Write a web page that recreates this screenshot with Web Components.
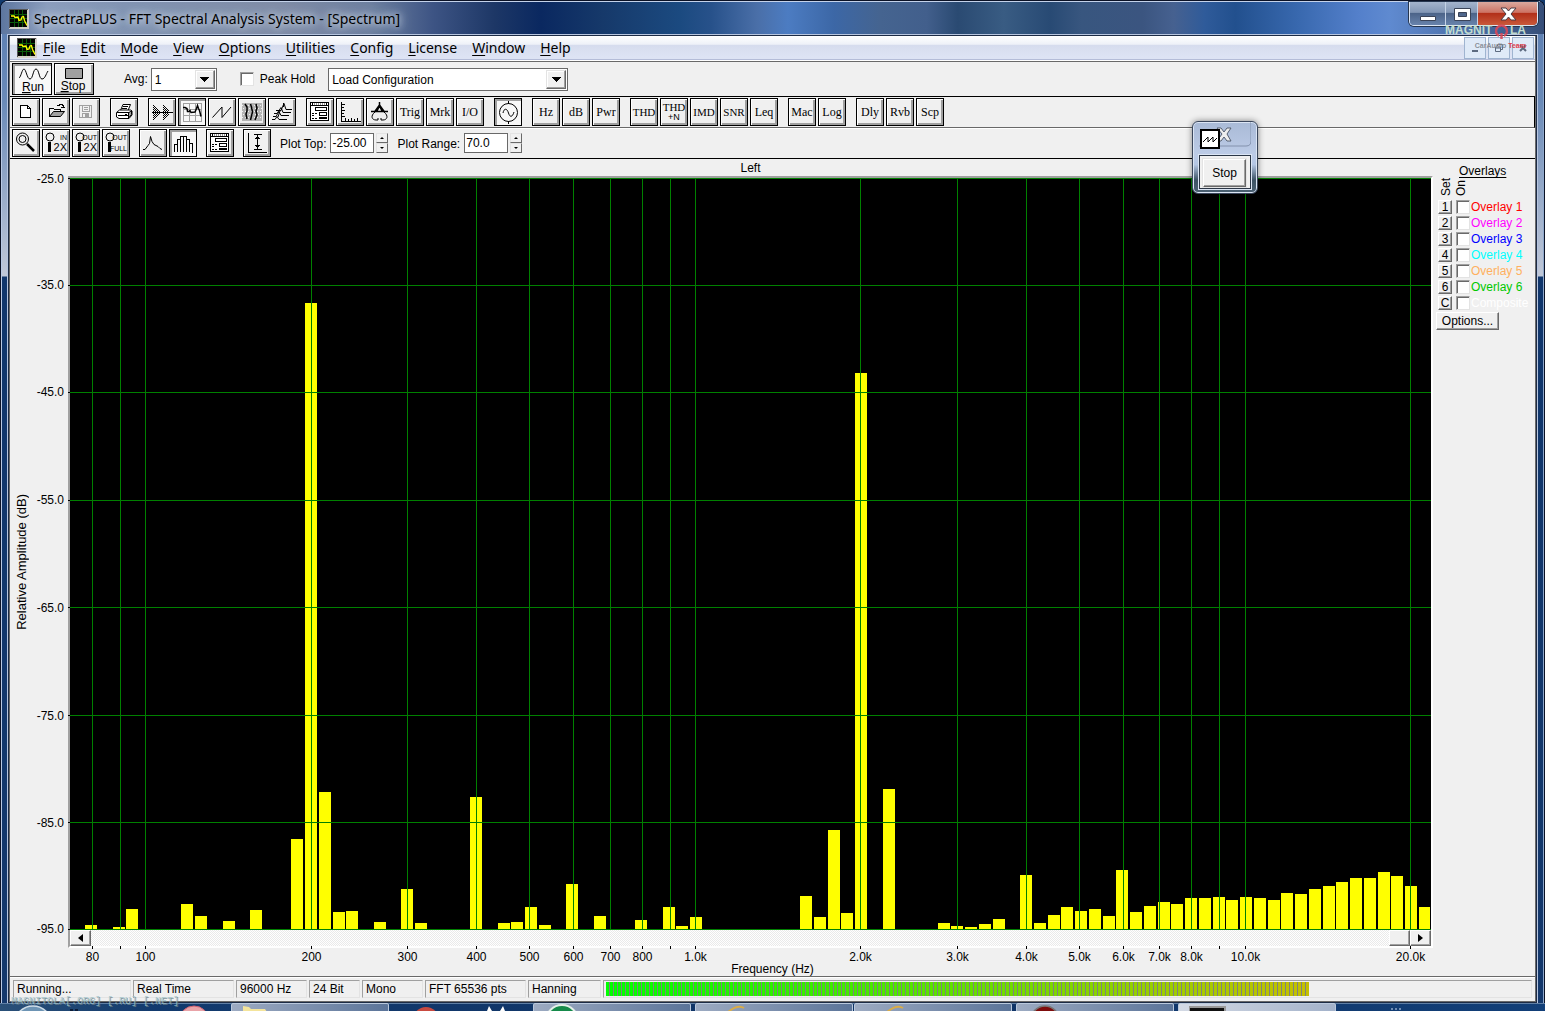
<!DOCTYPE html>
<html lang="en">
<head>
<meta charset="utf-8">
<title>SpectraPLUS - FFT Spectral Analysis System - [Spectrum]</title>
<style>
html,body{margin:0;height:100%}
body{display:flex;flex-direction:column;background:#123a6e;overflow:hidden;font:12px/14px "Liberation Sans",Arial,sans-serif;color:#000}
app-window{flex:1;min-height:0}
</style>
</head>
<body>
<app-window>
  <title-bar slot="title">SpectraPLUS - FFT Spectral Analysis System - [Spectrum]</title-bar>
  <menu-bar></menu-bar>
  <run-bar></run-bar>
  <icon-bar></icon-bar>
  <plot-bar></plot-bar>
  <spectrum-view></spectrum-view>
  <status-bar></status-bar>
</app-window>
<task-bar></task-bar>
<float-window></float-window>
<water-mark></water-mark>

<script>
const define = (name, html, setup) => {
  const tpl = document.createElement('template');
  tpl.innerHTML = html;
  customElements.define(name, class extends HTMLElement {
    constructor() {
      super();
      this.attachShadow({mode: 'open'}).append(tpl.content.cloneNode(true));
    }
    connectedCallback() { if (setup) setup(this, this.shadowRoot); }
  });
};

const logo = `<svg width="20" height="20" viewBox="0 0 20 20" shape-rendering="crispEdges" aria-hidden="true">
<path fill="#d4d0c8" d="M0 0h20v20H0z"/><path fill="#555" d="M0 0h19v1H1v18H0z"/><path fill="#000" d="M1 1h17v17H1z"/>
<path stroke="#0a5a0a" d="M5.500 1v17M9.500 1v17M13.500 1v17M1 5.500h17M1 9.500h17M1 13.500h17"/>
<path fill="none" stroke="#ff0" stroke-width="1.300" shape-rendering="auto" d="M2 7h3l1 1.500 3-.5 1 3.500 2-.5 1-3 1.500-.5 1 4 2.500 5"/></svg>`;

define('app-window', `
<style>
:host{display:flex;flex-direction:column;box-sizing:border-box;border:1px solid #0b1226;border-bottom:0;border-radius:8px 8px 0 0;
 background:linear-gradient(#5a7db2 0,#6a8ab8 100px,#c0c8d8 275px,#10366c 276px,#14386c 100%);overflow:hidden;
 box-shadow:inset 1px 1px #b9c9e4,inset -1px 0 #8fa9cc}
.client{flex:1;min-height:0;display:flex;flex-direction:column;margin:0 6px;border:solid #b7c5df;border-width:1px 1px 0}
.inner{flex:1;min-height:0;display:flex;flex-direction:column;border:1px solid #1c2b45;background:#f0f0f0}
.body{flex:1;min-height:0;display:flex;flex-direction:column;border:solid #696969;border-width:0 1px 1px}
</style>
<slot name="title"></slot>
<div class="client"><div class="inner"><div class="body"><slot></slot></div></div></div>`);

define('title-bar', `
<style>
:host{display:flex;align-items:center;height:33px;box-sizing:border-box;padding:2px 0 0 8px;border-top:1px solid #c4d2ea;
 background:linear-gradient(90deg,#5d769f 0,#8b9dbd 3%,#8193b2 8%,#7f8ca6 18%,#6c7f9f 24%,#3d5484 28%,#1d3766 32%,#0a2860 35%,#16396a 39%,#1b4a80 44%,#27518a 46%,#4a6fa8 49%,#4c7cc2 51%,#3c67a6 54%,#456490 57%,#425f8c 60%,#2a4a72 62%,#395c83 65%,#284a74 68%,#38567f 70%,#3b5580 74%,#466190 76%,#2f5b9a 78%,#22508e 80%,#3868ae 84%,#5480cb 88%,#5f8ad0 90%,#4c6fa8 95%,#364e78 100%);font:14px/20px "Noto Sans","Open Sans",sans-serif}
.text{margin-left:5px;flex:1;text-shadow:0 0 6px #c9d3e2,0 0 10px #c9d3e2,0 0 14px #b4c0d4}
.buttons{display:flex;align-self:flex-start;box-sizing:border-box;width:129px;height:24px;margin:-2px 6px 0 0;border:1px solid #dce6f4;border-top:0;border-radius:0 0 5px 5px;overflow:hidden;box-shadow:0 0 0 1px #26364f}
button{flex:none;padding:0;margin:0;border:0;height:23px;display:grid;place-items:center;background:linear-gradient(#a4b4cd 0,#8397b5 45%,#4c6489 50%,#6883ac)}
button:nth-child(1){width:35px}button:nth-child(2){width:33px;border-left:1px solid #c4d2e6;border-right:1px solid #c4d2e6}
button:nth-child(3){width:59px;background:linear-gradient(#dba99e 0,#cd7364 45%,#b2301a 50%,#c9593a)}
svg{display:block}
.logo{display:flex}
</style>
<span class="logo">${logo}</span><span class="text"><slot></slot></span>
<div class="buttons">
<button aria-label="Minimize"><svg width="18" height="16"><path d="M1.500 10.500h15v4h-15z" fill="#fff" stroke="#3b4458"/></svg></button>
<button aria-label="Restore"><svg width="18" height="16"><path fill-rule="evenodd" d="M1.500 2.500h16v12h-16zM5.500 6.500v4h8v-4z" fill="#fff" stroke="#3b4458"/></svg></button>
<button aria-label="Close"><svg width="18" height="16"><path d="M2 2h5l2.500 3L12 2h5l-5 6 5 6h-5l-2.500-3L7 14H2l5-6z" fill="#fff" stroke="#4a3c44"/></svg></button>
</div>`);

define('menu-bar', `
<style>
:host{display:flex;align-items:center;height:24px;box-sizing:border-box;padding:1px 1px 0 7px;border-bottom:1px solid #b4bcd8;
 background:linear-gradient(#fff 0,#eef1f8 36%,#d6dcee 40%,#dde3f4 90%);box-shadow:0 1px #fff,0 2px #696969;margin-bottom:2px;font:14px/20px "Noto Sans","Open Sans",sans-serif}
nav{display:flex;gap:15px;margin-left:6px;flex:1}
a{color:#000;text-decoration:none}
.mdi{display:flex;gap:2px}
button{width:22px;height:22px;padding:0;border:1px solid #9fb4d0;background:#dfeaf8;display:grid;place-items:center}
span{display:flex}
u{text-underline-offset:2px}
</style>
<span>${logo}</span>
<nav aria-label="Main menu"><a href="#"><u>F</u>ile</a><a href="#"><u>E</u>dit</a><a href="#"><u>M</u>ode</a><a href="#"><u>V</u>iew</a><a href="#"><u>O</u>ptions</a><a href="#"><u>U</u>tilities</a><a href="#"><u>C</u>onfig</a><a href="#"><u>L</u>icense</a><a href="#"><u>W</u>indow</a><a href="#"><u>H</u>elp</a></nav>
<div class="mdi">
<button aria-label="Minimize document"><svg width="10" height="10"><path d="M2 7h6v2H2z" fill="#5d6b80"/></svg></button>
<button aria-label="Restore document"><svg width="10" height="10"><path d="M3.500 3V1.500h5v5H7M1.500 4h5v4.500h-5zM1 5h6" fill="none" stroke="#5d6b80"/></svg></button>
<button aria-label="Close document"><svg width="10" height="10"><path d="M2 2l6 6M8 2L2 8" stroke="#5d6b80" stroke-width="2"/></svg></button>
</div>`);

/* square toolbar button; the slot takes a caption or a 28x28 drawing */
define('tool-button', `
<style>
:host{display:block;flex:none;width:28px;height:28px}
button{width:100%;height:100%;box-sizing:border-box;padding:0;border:1px solid #000;background:#f0f0f0;color:#000;overflow:hidden;
 box-shadow:inset 1px 1px #fff,inset -2px -2px #a0a0a0;display:grid;place-items:center;font:12px/12px "Liberation Serif","Times New Roman",serif}
:host([caps]) button{font-size:11px}
:host([pressed]) button{background:#f8f8f8;box-shadow:inset 2px 2px #a0a0a0}
:host([wide]){width:40px;height:32px}
::slotted(svg){display:block;margin:-1px;font-family:"Liberation Sans",Arial,sans-serif}
</style><button type="button"><slot></slot></button>`, (el, root) => {
  root.querySelector('button').setAttribute('aria-label', el.getAttribute('label') || el.textContent.trim());
  root.querySelector('button').setAttribute('aria-pressed', el.hasAttribute('pressed'));
});

define('combo-box', `
<style>
:host{display:grid;box-sizing:border-box;height:23px;border:1px solid #696969;background:#fff}
select,.arrow{grid-area:1/1}
select{appearance:none;border:0;background:none;margin:0;padding:1px 24px 0 3px;font:inherit;color:#000;width:100%}
.arrow{justify-self:end;margin:1px;width:20px;box-sizing:border-box;background:#f0f0f0;border:1px solid #e3e3e3;border-right-color:#696969;border-bottom-color:#696969;
 box-shadow:inset -1px -1px #a0a0a0,inset 1px 1px #fff;display:grid;place-items:center;pointer-events:none}
</style><select><option></option></select><span class="arrow" aria-hidden="true"><svg width="9" height="5" shape-rendering="crispEdges"><path d="M0 0h9L4.500 5z"/></svg></span>`,
(el, root) => {
  root.querySelector('option').textContent = el.getAttribute('value');
  root.querySelector('select').setAttribute('aria-label', el.getAttribute('label'));
});

define('spin-field', `
<style>
:host{display:flex;align-items:center}
label{margin:2px 4px 0 0}
input{width:44px;height:20px;box-sizing:border-box;border:1px solid #696969;padding:0 0 0 1px;font:inherit;background:#fff;color:#000;border-radius:0}
.spin{display:flex;flex-direction:column;margin-left:2px}
button{width:12px;height:10px;padding:0;border:1px solid #e3e3e3;border-right-color:#696969;border-bottom-color:#696969;background:#f0f0f0;display:grid;place-items:center}
</style><label for="f"></label><input id="f" type="text"><span class="spin">
<button aria-label="Increase"><svg width="4" height="2"><path d="M0 2l2-2 2 2z"/></svg></button>
<button aria-label="Decrease"><svg width="4" height="2"><path d="M0 0l2 2 2-2z"/></svg></button></span>`,
(el, root) => {
  root.querySelector('label').textContent = el.getAttribute('label');
  root.querySelector('input').value = el.getAttribute('value');
});

const barStyle = `:host{display:flex;align-items:flex-start;box-sizing:border-box;padding-left:2px}.g{display:flex;gap:2px}`;

define('run-bar', `
<style>${barStyle}
:host{height:35px;padding-top:1px;border-bottom:1px solid #000}
.ctl{display:flex;align-items:center;height:32px}
.avg{margin:0 3px 0 30px}
.a1{width:66px}.a2{width:240px}
.peak{display:flex;align-items:center;gap:6px;margin:0 13px 0 23px}
input{appearance:none;width:14px;height:14px;margin:0;background:#fff;border:1px solid #a0a0a0;border-right-color:#e3e3e3;border-bottom-color:#e3e3e3;box-shadow:inset 1px 1px #696969}
</style>
<div class="g">
<tool-button wide pressed label="Run"><svg width="40" height="32" fill="none" stroke="#000"><path d="M7 15c2-1 3-9 5-9s3 10 6 10 3-10 6-10 3 10 6 10 4-5 6-8"/><text x="21" y="28" fill="#000" stroke="none" font-size="12" text-anchor="middle"><tspan text-decoration="underline">R</tspan>un</text></svg></tool-button>
<tool-button wide label="Stop"><svg width="40" height="32"><path d="M11.500 5.500h17v10h-17z" fill="#a0a0a0" stroke="#000"/><text x="19" y="27" font-size="12" text-anchor="middle"><tspan text-decoration="underline">S</tspan>top</text></svg></tool-button>
</div>
<div class="ctl"><span class="avg">Avg:</span><combo-box class="a1" label="Avg" value="1"></combo-box>
<label class="peak"><input type="checkbox">Peak Hold</label>
<combo-box class="a2" label="Configuration" value="Load Configuration"></combo-box></div>`);

const I = (label, body, pressed = '') => `<tool-button label="${label}" ${pressed}><svg width="28" height="28" viewBox="0 0 28 28" fill="none" stroke="#000" shape-rendering="crispEdges">${body}</svg></tool-button>`;
const T = s => s.split(' ').map(t => `<tool-button${/^[A-Z]{3}$/.test(t) ? ' caps' : ''}>${t}</tool-button>`).join('');
const G = s => `<div class="g">${s}</div>`;

const dialogIcon = `<path fill="#fff" d="M4.500 4.500h18v18h-18z"/><path stroke="#999" stroke-width="2" stroke-dasharray="1 1" d="M8 6h12"/><path d="M5 7.500h17M6.500 5v2M20.500 5v2"/><path d="M9.500 9.500h11v3h-11zM13.500 14.500h7v3h-7zM13.500 19.500h7v1h-7z"/><path stroke-dasharray="2 1" d="M6 15.500h5M6 17.500h3M6 20.500h5"/>`;
const lens = `<circle cx="8" cy="8" r="4" shape-rendering="auto"/><path stroke-width="3" d="M7.500 13v10"/>`;

define('icon-bar', `
<style>${barStyle}
:host{height:31px;padding-top:1px;gap:10px;border-right:1px solid #000;border-bottom:1px solid #696969;box-shadow:0 1px #fff;margin-bottom:1px}
.two{line-height:9px;text-align:center}
.two small{font:9px/9px "Liberation Sans",sans-serif}
</style>
${G(
I('New','<path fill="#fff" d="M8.500 7.500h7l3 3v9h-10z"/><path d="M15.500 7.500v3h3"/>')+
I('Open','<path d="M7.500 18.500v-8h4l1 1h6v2"/><path fill="#a0a0a0" shape-rendering="auto" d="M7.500 18.500l4-5h11l-4 5z"/><path d="M15 7.500h2l1-1h2l1 1v2M19 9.500h4"/>')+
I('Save','<path stroke="#a0a0a0" d="M7.500 7.500h12v12h-12zM10.500 7.500v6h7v-6M12 9.500h4M12 11.500h4"/><path fill="#a0a0a0" stroke="none" d="M10 15h7v4h-4v-3h-2v3h-1z"/>'))}
${G(I('Print','<g shape-rendering="auto"><path fill="#fff" d="M10.500 12.500l2.500-6h7.500l-2.500 6"/><path fill="#fff" d="M6.500 14.500l3-2.500h11l1.500 1v4l-3 3.500h-10l-2.500-1.500z"/><path fill="#a0a0a0" d="M18.500 20v-5l3-2.500v4z"/></g><path d="M13 8.500h5M12 10.500h5M7 14.500h12M8 17.500h10"/><path d="M15 16.500h2"/>'))}
${G(
I('Time series','<path d="M4 14.500h21"/><path stroke-dasharray="1 1" d="M5.500 7v15M7.500 9v12M9.500 11v8M11.500 13v4M6.500 8v14M8.500 10v10M10.500 12v6M15.500 7v15M17.500 9v12M19.500 11v8M16.500 8v14M18.500 10v10M20.500 12v6"/>')+
I('Spectrum','<path stroke="#a0a0a0" d="M5.500 5.500h18v18h-18zM11.500 5v19M17.500 5v19M5 11.500h19M5 17.500h19"/><path stroke-width="1.500" shape-rendering="auto" d="M5 9.500h2l2 1 .5 3 1.500 0 1-1 1 2 4-.5 1.500-3.500 1-3 1 3 1 2 1.500 6"/>','pressed')+
I('Phase','<path shape-rendering="auto" d="M4.500 19.500L14 9v10.500l9-10.500"/>')+
I('Spectrogram','<path fill="#b4b4b4" stroke="none" d="M4 5h20v18H4z"/><path stroke="#f0f0f0" stroke-dasharray="1 2" d="M4 7.500h20M5 10.500h19M4 13.500h20M5 16.500h19M4 19.500h20"/><path stroke-width="1.500" shape-rendering="auto" d="M7 6l2 3 0 4-1 3 1 5M12.500 6l1 3 1 5-2 8M18 6l1 4-1 3 1 4-2 5"/>')+
I('3-D surface','<path shape-rendering="auto" d="M4 21.500h3l2-3 2 3h8M5 18.500h3l3-5 2 4h8M6 15.500h3l4-6 2 5h8M8 12.500h5l3-7 2 6h6M15.500 5v4M10 19l2-6"/>'))}
${G(
I('Settings',dialogIcon)+
I('Scaling','<path d="M5.500 4v19h19M5 6.500h4M5 9.500h3M5 12.500h4M5 15.500h3M5 18.500h4M9.500 20v3M12.500 21v2M15.500 20v3M18.500 21v2M21.500 20v3"/>')+
I('Calibration','<g shape-rendering="auto"><path stroke-width="1.500" d="M13.500 4v4M5 13.500h17M13.500 7l-5 7M13.500 7l5 7M13.500 7v3M11 13l2.500-5 2.500 5"/><path d="M9 14c-5 4-3 8 1 8h2v-2M18 14c5 4 3 8-1 8h-2v-2"/></g>')+
T('Trig Mrk I/O'))}
${G(I('Signal generator','<g shape-rendering="auto"><circle cx="14.500" cy="14.500" r="9"/><path d="M14.500 3v3M14.500 23v3M9 15c1-5 4-5 5.500 0s4 4 5.500-1"/></g>','pressed'))}
${G(T('Hz dB Pwr'))}
${G(T('THD')+'<tool-button caps label="THD+N"><div class="two">THD<br><small>+N</small></div></tool-button>'+T('IMD SNR Leq'))}
${G(T('Mac Log'))}
${G(T('Dly Rvb Scp'))}`);

const z = (a, b) => `${lens}<g fill="#000" stroke="none" text-anchor="end"><text x="25" y="11" font-size="7">${a}</text><text x="25" y="22" font-size="${b === 'FULL' ? 7 : 11}">${b}</text></g>`;
define('plot-bar', `
<style>${barStyle}
:host{height:30px;gap:9px;border-bottom:1px solid #000}
.f{display:flex;height:28px;gap:9px}
</style>
${G(
I('Zoom','<g shape-rendering="auto"><circle cx="10.500" cy="10" r="6"/><circle cx="10.500" cy="10" r="3.500"/><path stroke-width="2.500" d="M15 15l7 7"/></g>')+
I('Zoom in 2X',z('IN','2X'))+I('Zoom out 2X',z('OUT','2X'))+I('Zoom out full',z('OUT','FULL')))}
${G(
I('Line graph','<path shape-rendering="auto" d="M4 20.500h2l3-4 1.500-2 1-7 1.500 5 2 3 4 2 2 2 2 1"/>')+
I('Bar graph','<path d="M5.500 23v-7.500h3v7.500v-12.500h3v12.500V7.500h3v15.500V7.500h3v15.500V10.500h3v12.500V14.500h3v9"/>','pressed'))}
${G(I('Plot options',dialogIcon))}
${G(I('Autoscale','<path d="M5.500 4v19h18M11 5.500h8M11 20.500h8M14.500 6v14M13 8.500h3M12 9.500h5M13 17.500h3M12 16.500h5"/>'))}
<div class="f"><spin-field label="Plot Top:" value="-25.00"></spin-field><spin-field label="Plot Range:" value="70.0"></spin-field></div>`);

/* frequency / level plot: 40 bands per decade on a log axis */
const W = 1361, H = 752, DECADE = 549.8;
const bands = {
 '-16':747,'-14':749,'-13':731,'-9':726,'-8':738,'-6':743,'-4':732,'-1':661,0:125,1:614,2:734,3:733,5:744,7:711,8:745,12:619,14:745,15:744,16:729,17:747,
 19:706,21:738,24:742,26:729,27:748,28:739,36:718,37:739,38:652,39:735,40:195,42:611,46:745,47:748,48:749,49:746,50:741,52:697,53:745,54:737,55:729,56:733,57:731,58:738,
 59:692,60:734,61:728,62:724,63:726,64:720,65:720,66:719,67:722,68:719,69:720,70:722,71:715,72:716,73:711,74:708,75:704,76:700,77:700,78:694,79:698,80:708,81:729};
const ticks = [[80,'80'],[90],[100,'100'],[200,'200'],[300,'300'],[400,'400'],[500,'500'],[600,'600'],[700,'700'],[800,'800'],[900],[1000,'1.0k'],[2000,'2.0k'],[3000,'3.0k'],
 [4000,'4.0k'],[5000,'5.0k'],[6000,'6.0k'],[7000,'7.0k'],[8000,'8.0k'],[9000],[10000,'10.0k'],[20000,'20.0k']];
const px = v => (v / W * 100).toFixed(4) + '%';
const py = v => (v / H * 100).toFixed(4) + '%';
const fx = f => Math.round(75 + DECADE * Math.log10(f / 100)) + .5;

define('spectrum-view', `
<style>
:host{flex:1;min-height:0;display:grid;grid-template:17px 1fr 15px 13px/58px 1fr 102px}
h1{grid-area:1/2;margin:0;font:inherit;line-height:19px;text-align:center}
.ytitle{grid-area:2/1;justify-self:start;align-self:center;writing-mode:vertical-rl;transform:rotate(180deg);margin-left:5px;font-size:13px}
.frame{grid-area:2/2;display:flex;flex-direction:column;min-height:0;border:2px solid #a0a0a0;border-right-color:#fff;border-bottom-color:#fff}
svg{display:block;overflow:visible}
.plot{flex:1;min-height:0;width:100%;background:#000}
.scroll{display:flex;height:16px;background:conic-gradient(#fff 25%,#eaeaea 0 50%,#fff 0 75%,#eaeaea 0) 0 0/2px 2px}
.scroll button,.thumb{width:21px;height:16px;box-sizing:border-box;padding:0;background:#f0f0f0;border:1px solid #fff;border-right-color:#696969;border-bottom-color:#696969;box-shadow:inset -1px -1px #a0a0a0;display:grid;place-items:center}
.thumb{margin-left:auto}
.xaxis{grid-area:3/2;margin:0 2px;width:calc(100% - 4px);height:15px}
.xtitle{grid-area:4/1/5/4;text-align:center;line-height:13px}
overlay-panel{grid-area:1/3/4/4}
</style>
<h1>Left</h1><div class="ytitle">Relative Amplitude (dB)</div>
<div class="frame"><svg class="plot" role="img" aria-label="Spectrum, left channel"></svg>
<div class="scroll"><button aria-label="Scroll left"><svg width="5" height="8"><path d="M5 0v8L0 4z"/></svg></button><div class="thumb"></div><button aria-label="Scroll right"><svg width="5" height="8"><path d="M0 0v8l5-4z"/></svg></button></div></div>
<svg class="xaxis"></svg>
<div class="xtitle">Frequency (Hz)</div><overlay-panel></overlay-panel>`, (el, root) => {
  let s = '<g shape-rendering="crispEdges"><g fill="#ff0">';
  for (const k in bands) {
    const x = Math.round(235 + 13.75 * k), w = Math.min(12, W - x - 1);
    s += `<rect x="${px(x)}" y="${py(bands[k])}" width="${px(w)}" height="${py(H - 1 - bands[k])}"/>`;
  }
  s += '</g><g stroke="#008000">';
  for (const [f] of ticks) s += `<line x1="${px(fx(f))}" x2="${px(fx(f))}" y1="0" y2="100%"/>`;
  const rows = [0, 107, 214, 322, 429, 537, 644, 751];
  for (const y of rows) s += `<line x1="0" x2="100%" y1="${py(y + .5)}" y2="${py(y + .5)}"/>`;
  s += '</g><g stroke="#000">';
  for (const y of rows) s += `<line x1="-2" x2="0" y1="${py(y + .5)}" y2="${py(y + .5)}"/>`;
  s += '</g></g><g text-anchor="end">';
  rows.forEach((y, i) => s += `<text x="-6" y="${py(y + .5)}" dy="4">-${25 + i * 10}.0</text>`);
  root.querySelector('.plot').innerHTML = s + '</g>';
  root.querySelector('.xaxis').innerHTML = ticks.map(([f, t]) =>
    `<line stroke="#000" shape-rendering="crispEdges" x1="${px(fx(f))}" x2="${px(fx(f))}" y1="-2" y2="1"/>` +
    (t ? `<text text-anchor="middle" x="${px(fx(f))}" y="13">${t}</text>` : '')).join('');
});

define('overlay-panel', `
<style>
:host{display:block;padding:5px 0 0 3px}
h2{font:inherit;font-weight:normal;text-decoration:underline;margin:0;padding-left:23px;line-height:14px;text-underline-offset:2px}
.cols{display:flex;height:20px;padding:0 0 1px 3px;align-items:flex-end}
.cols span{writing-mode:vertical-rl;transform:rotate(180deg);width:15px;line-height:15px;margin-bottom:2px}
.row{display:flex;align-items:center;height:16px;padding-left:2px}
.row button{width:14px;height:14px;padding:0;font:inherit;line-height:12px;background:#f0f0f0;color:#000;border:1px solid #fff;border-right-color:#696969;border-bottom-color:#696969;box-shadow:inset -1px -1px #a0a0a0}
.row input{appearance:none;width:14px;height:14px;margin:0 1px 0 4px;background:#fff;border:1px solid #a0a0a0;border-right-color:#e3e3e3;border-bottom-color:#e3e3e3;box-shadow:inset 1px 1px #696969}
.opt{display:block;width:63px;height:18px;margin-top:1px;padding:0;font:inherit;line-height:14px;background:#f0f0f0;color:#000;border:1px solid #fff;border-right-color:#696969;border-bottom-color:#696969;box-shadow:inset -1px -1px #a0a0a0}
</style>
<h2>Overlays</h2><div class="cols"><span>Set</span><span>On</span></div><div class="rows"></div><button class="opt">Options...</button>`, (el, root) => {
  const rows = [['1','Overlay 1','#f00'],['2','Overlay 2','#f0f'],['3','Overlay 3','#00f'],['4','Overlay 4','#0ff'],['5','Overlay 5','#ffb060'],['6','Overlay 6','#00c800'],['C','Composite','#fff']];
  root.querySelector('.rows').innerHTML = rows.map(([k, t, c], i) =>
    `<div class="row"><button>${k}</button><input type="checkbox" id="o${i}"><label for="o${i}" style="color:${c}">${t}</label></div>`).join('');
});

define('status-bar', `
<style>
:host{display:flex;gap:2px;height:25px;box-sizing:border-box;padding:3px 3px 3px 3px;border-top:1px solid #696969;box-shadow:inset 0 1px #fff}
span,.level{box-sizing:border-box;height:18px;border:1px solid #a0a0a0;border-right-color:#e3e3e3;border-bottom-color:#e3e3e3;padding-left:3px;line-height:16px;white-space:nowrap}
.level{flex:1;padding:1px 0 1px 2px;display:flex}
.fill{width:76%;background:repeating-linear-gradient(90deg,transparent 0 3px,#808080 3px 4px),linear-gradient(90deg,#0f0,#c4c000)}
</style>
<span style="width:118px">Running...</span><span style="width:101px">Real Time</span><span style="width:71px">96000 Hz</span><span style="width:51px">24 Bit</span><span style="width:61px">Mono</span><span style="width:101px">FFT 65536 pts</span><span style="width:73px">Hanning</span>
<div class="level" role="meter" aria-label="Input level" aria-valuenow="76"><div class="fill"></div></div>`);

define('float-window', `
<style>
:host{position:absolute;left:1192px;top:121px;width:66px;height:73px;box-sizing:border-box;border:1px solid #3b475c;border-radius:6px;
 background:linear-gradient(#a9bad6 0,#bccbe6 45%,#b4c6e4 60%,#3c5264 82%,#4d6274);box-shadow:inset 0 0 0 1px #dbe5f4,0 0 6px #0007;padding:0 6px 4px;display:flex;flex-direction:column}
.top{flex:1;display:flex;align-items:center;padding-bottom:1px}
.top svg{display:block}
.box{border:1px solid #2b3646;outline:1px solid #dbe5f4;background:#f0f0f0;height:30px;padding:3px 4px 1px 3px;display:flex}
.box button{flex:1;padding:0;font:inherit;color:#000;background:#f0f0f0;border:1px solid #fff;border-right-color:#696969;border-bottom-color:#696969;box-shadow:inset -1px -1px #a0a0a0,0 0 0 1px #e3e3e3}
</style>
<div class="top"><svg width="52" height="32" aria-hidden="true"><path d="M-6 0V19q0 5 5 5H47q5 0 5-5V0" fill="none" stroke="#8392ad"/>
<path d="M18 6h4l3 4 3-4h4l-4 6 4 7h-4l-3-4-3 4h-4l5-7z" fill="#eee" stroke="#555f70"/>
<path d="M2 8h18v18H2z" fill="#fff" stroke="#000" stroke-width="2"/><path d="M4 20l5-5v5l5-5v5l4-4" fill="none" stroke="#000"/></svg></div>
<div class="box"><button>Stop</button></div>`);

define('water-mark', `
<style>
:host{display:contents}
.logo{position:absolute;right:19px;top:19px;width:81px;pointer-events:none;text-align:right}
.big{display:flex;justify-content:space-between;align-items:center;font:bold 12px/23px "Liberation Sans",sans-serif;color:#cfe8d4;opacity:.9}
.small{font:bold 7px/7px "Liberation Sans",sans-serif;color:#8a8f98}
.small b{color:#e0404c}
.url{position:absolute;left:11px;bottom:4px;font:10px/10px "Liberation Mono",monospace;color:#9fc3cc;text-shadow:1px 1px #6a7f88;opacity:.8;pointer-events:none}
</style>
<div class="logo"><div class="big"><span>MAGNIT</span><svg width="15" height="18"><path d="M5 14a5.500 5.500 0 1 1 5 0M7.500 11v6" fill="none" stroke="#d8485a" stroke-width="2.500"/></svg><span>LA</span></div><div class="small">CarAudio <b>Team</b></div></div>
<div class="url">MAGNITOLA[.ORG] [.RU] [.NET]</div>`);

define('task-bar', `
<style>
:host{display:flex;height:8px;background:linear-gradient(90deg,#2a5078,#123a6e 10%,#0f3264 60%,#123f78);overflow:hidden;box-shadow:inset 0 1px #5f7fa5;flex:none}
svg{display:block;flex:none}
.b{flex:none;box-sizing:border-box;width:158px;height:12px;border:1px solid #b9c8dc;border-radius:2px 2px 0 0;background:linear-gradient(90deg,#9dabc2,#5b7499);margin-left:4px}
.b.on{background:linear-gradient(90deg,#d3d9e4,#a3b2ca)}
.b svg{margin-left:10px}
</style>
<svg width="227" height="8"><circle cx="33" cy="22" r="19" fill="#6d94b4" stroke="#cfdde8" stroke-width="1.500"/><path d="M70 6h3v2h-3zM75 6h3v2h-3z" fill="#0b1c38"/><circle cx="194" cy="18" r="15" fill="#e9a3a8" stroke="#d06070"/></svg>
<div class="b"><svg width="30" height="8"><path d="M1 8V2l6 1 2 2h14l2 3z" fill="#f4e49b"/></svg></div>
<svg width="140" height="8"><circle cx="37" cy="17" r="13" fill="#c94a40"/><path d="M98 8l2-5 3 5M111 8l3-5 2 5" fill="#fff"/></svg>
<div class="b"><svg width="40" height="8"><circle cx="18" cy="17" r="16" fill="#158a4a" stroke="#e4efe8" stroke-width="2"/></svg></div>
<div class="b"><svg width="60" height="8"><path d="M22 8q10-8 16-4" fill="none" stroke="#d9ac48" stroke-width="2"/></svg></div>
<div class="b" style="margin-left:1px"><svg width="60" height="8"><path d="M22 8q10-8 16-4" fill="none" stroke="#d9ac48" stroke-width="2"/></svg></div>
<div class="b"><svg width="40" height="8"><circle cx="18" cy="16" r="14" fill="#7f0c0c" stroke="#777" stroke-width="1.500"/></svg></div>
<div class="b on"><svg width="40" height="8"><path d="M0 3h36v6H0z" fill="#111" stroke="#999" stroke-width="2"/></svg></div>
<svg width="80" height="8"><path d="M55 5h2v2h-2zM59 5h2v2h-2zM63 5h2v2h-2z" fill="#6f8cb4"/></svg>`);
</script>
</body>
</html>
